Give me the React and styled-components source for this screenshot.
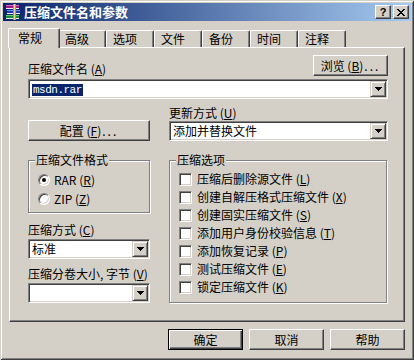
import React from 'react';
import styled, { createGlobalStyle, css } from 'styled-components';

const FACE = '#D4D0C8';
const HI = '#FFFFFF';
const SH = '#808080';
const DK = '#404040';

const Global = createGlobalStyle`
  html, body { margin: 0; padding: 0; background: ${FACE}; }
  body { font-family: "Noto Sans CJK SC", "DejaVu Sans", sans-serif; font-size: 12px; }
  * { box-sizing: border-box; }
`;

const Window = styled.div`
  width: 414px;
  height: 360px;
  background: ${FACE};
  padding: 3px;
  box-shadow: inset 1px 1px 0 ${FACE}, inset -1px -1px 0 ${DK}, inset 2px 2px 0 ${HI}, inset -2px -2px 0 ${SH};
  display: flex;
  flex-direction: column;
  color: #000;
  font-family: "Noto Sans CJK SC", "DejaVu Sans", sans-serif;
  font-size: 12px;
  line-height: 14px;
`;

const TitleBar = styled.div`
  height: 18px;
  flex: none;
  background: linear-gradient(to right, #0A246A, #A6CAF0);
  display: flex;
  align-items: center;
  padding: 0 2px;
  color: #fff;
`;

const TitleText = styled.div`
  flex: 1;
  margin-left: 3px;
  font-weight: bold;
  font-size: 13px;
  line-height: 16px;
  white-space: nowrap;
`;

const CaptionBtn = styled.div`
  width: 16px;
  height: 14px;
  background: ${FACE};
  border: 1px solid;
  border-color: ${HI} ${DK} ${DK} ${HI};
  box-shadow: inset -1px -1px 0 ${SH};
  display: flex;
  align-items: center;
  justify-content: center;
  color: #000;
  margin-left: ${p => p.$gap || 0}px;
  font-family: "Liberation Sans", sans-serif;
  font-weight: bold;
  font-size: 11px;
  line-height: 12px;
`;

const Client = styled.div`
  flex: 1;
  padding: 7px 6px 0 6px;
  display: flex;
  flex-direction: column;
`;

const TabStrip = styled.div`
  display: flex;
  align-items: flex-end;
  height: 19px;
  padding-left: 1px;
  position: relative;
  z-index: 1;
`;

const Tab = styled.div`
  width: 48px;
  height: 17px;
  border-top: 1px solid ${HI};
  border-left: 1px solid ${HI};
  border-right: 1px solid ${DK};
  border-radius: 2px 2px 0 0;
  box-shadow: inset -1px 0 0 ${SH};
  padding: 1px 0 0 6px;
  white-space: nowrap;
  background: ${FACE};
  ${p => p.$active && css`
    width: 52px;
    height: 20px;
    margin: 0 -2px -1px -2px;
    padding: 2px 0 0 9px;
    position: relative;
    z-index: 2;
  `}
`;

const Panel = styled.div`
  width: 396px;
  height: 275px;
  border-top: 1px solid ${HI};
  border-left: 1px solid ${HI};
  border-right: 1px solid ${DK};
  border-bottom: 1px solid ${DK};
  box-shadow: inset -1px -1px 0 ${SH};
  padding: 7px 16px 0 18px;
  display: flex;
  flex-direction: column;
`;

const TopRow = styled.div`
  display: flex;
  align-items: flex-end;
  justify-content: space-between;
  height: 21px;
`;

const Label = styled.div`
  height: 14px;
  line-height: 14px;
  white-space: nowrap;
  margin-top: ${p => p.$mt || 0}px;
`;

const Dots = styled.span`
  letter-spacing: 2px;
  margin-left: 1px;
`;

const Button = styled.div`
  width: ${p => p.$w ? `${p.$w}px` : '100%'};
  height: 21px;
  background: ${FACE};
  border: 1px solid;
  border-color: ${HI} ${DK} ${DK} ${HI};
  box-shadow: inset -1px -1px 0 ${SH};
  display: flex;
  align-items: center;
  justify-content: center;
  white-space: nowrap;
  padding-top: 1px;
  ${p => p.$default && css`
    border-color: #000;
    box-shadow: inset 1px 1px 0 ${HI}, inset -1px -1px 0 ${DK}, inset -2px -2px 0 ${SH};
  `}
`;

const Combo = styled.div`
  height: 20px;
  width: 100%;
  background: #fff;
  border: 1px solid;
  border-color: ${SH} ${HI} ${HI} ${SH};
  box-shadow: inset 1px 1px 0 ${DK}, inset -1px -1px 0 ${FACE};
  padding: 1px;
  display: flex;
  align-items: center;
  margin-top: ${p => p.$mt || 0}px;
`;

const ComboText = styled.div`
  flex: 1;
  padding-left: 2px;
  white-space: nowrap;
  line-height: 16px;
`;

const Selected = styled.span`
  background: #0A246A;
  color: #fff;
  padding: 0 1px;
  font-family: "Liberation Mono", "DejaVu Sans Mono", monospace;
  font-size: 11px;
  letter-spacing: -0.5px;
`;

const ArrowBtn = styled.div`
  width: 16px;
  height: 16px;
  flex: none;
  background: ${FACE};
  border: 1px solid;
  border-color: ${FACE} ${DK} ${DK} ${FACE};
  box-shadow: inset 1px 1px 0 ${HI}, inset -1px -1px 0 ${SH};
  display: flex;
  align-items: center;
  justify-content: center;
`;

const Columns = styled.div`
  display: grid;
  grid-template-columns: 122px 219px;
  column-gap: 19px;
  margin-top: ${p => p.$mt || 0}px;
`;

const Cell = styled.div`
  display: flex;
  flex-direction: column;
  justify-content: ${p => p.$end ? 'flex-end' : 'flex-start'};
`;

const Group = styled.div`
  position: relative;
  border: 1px solid ${SH};
  box-shadow: inset 1px 1px 0 ${HI}, 1px 1px 0 ${HI};
  padding: 9px 0 ${p => p.$pb}px 9px;
  width: ${p => p.$w}px;
`;

const GroupTitle = styled.span`
  position: absolute;
  top: -8px;
  left: 6px;
  padding: 0 1px;
  background: ${FACE};
  line-height: 14px;
  white-space: nowrap;
`;

const OptionRow = styled.div`
  display: flex;
  align-items: center;
  height: ${p => p.$h}px;
  white-space: nowrap;
`;

const Radio = styled.div`
  width: 12px;
  height: 12px;
  border-radius: 50%;
  background: #fff;
  border: 1px solid;
  border-color: ${SH} ${HI} ${HI} ${SH};
  box-shadow: inset 1px 1px 0 ${DK}, inset -1px -1px 0 ${FACE};
  margin-right: 4px;
  display: flex;
  align-items: center;
  justify-content: center;
  flex: none;
`;

const Dot = styled.div`
  width: 4px;
  height: 4px;
  border-radius: 50%;
  background: #000;
`;

const Check = styled.div`
  width: 13px;
  height: 13px;
  background: #fff;
  border: 1px solid;
  border-color: ${SH} ${HI} ${HI} ${SH};
  box-shadow: inset 1px 1px 0 ${DK}, inset -1px -1px 0 ${FACE};
  margin-right: 5px;
  flex: none;
`;

const Footer = styled.div`
  display: flex;
  justify-content: flex-end;
  gap: 6px;
  margin-top: 7px;
  width: 396px;
`;

const Arrow = () => (
  <svg width="7" height="4" viewBox="0 0 7 4" shapeRendering="crispEdges">
    <path d="M0 0h7v1h-1v1h-1v1h-1v1h-1v-1h-1v-1h-1v-1h-1z" fill="#000" />
  </svg>
);

const RarIcon = () => (
  <svg width="16" height="16" viewBox="0 0 16 16" shapeRendering="crispEdges">
    <rect x="1" y="1" width="13" height="4" fill="#9C1C80" />
    <rect x="1" y="1" width="13" height="1" fill="#E060C8" />
    <rect x="2" y="6" width="13" height="4" fill="#2038B8" />
    <rect x="2" y="6" width="13" height="1" fill="#6890F0" />
    <rect x="1" y="11" width="13" height="4" fill="#18883C" />
    <rect x="1" y="11" width="13" height="1" fill="#60D070" />
    <rect x="1" y="4" width="13" height="1" fill="#F0F0F0" />
    <rect x="2" y="9" width="13" height="1" fill="#F0F0F0" />
    <rect x="1" y="14" width="13" height="1" fill="#F0F0F0" />
    <rect x="8" y="0" width="3" height="16" fill="#C09848" />
    <rect x="9" y="0" width="1" height="16" fill="#E8D090" />
  </svg>
);

const CloseGlyph = () => (
  <svg width="8" height="7" viewBox="0 0 8 7" shapeRendering="crispEdges">
    <path d="M0 0h2v1h1v1h2v-1h1v-1h2v1h-1v1h-1v1h-1v1h1v1h1v1h1v1h-2v-1h-1v-1h-2v1h-1v1h-2v-1h1v-1h1v-1h1v-1h-1v-1h-1v-1h-1z" fill="#000" />
  </svg>
);

const M = ({ k }) => <> (<u>{k}</u>)</>;

const ComboBox = ({ children }) => (
  <>
    <ComboText>{children}</ComboText>
    <ArrowBtn><Arrow /></ArrowBtn>
  </>
);

const checks = [
  ['压缩后删除源文件', 'L'],
  ['创建自解压格式压缩文件', 'X'],
  ['创建固实压缩文件', 'S'],
  ['添加用户身份校验信息', 'T'],
  ['添加恢复记录', 'P'],
  ['测试压缩文件', 'E'],
  ['锁定压缩文件', 'K'],
];

const tabs = ['常规', '高级', '选项', '文件', '备份', '时间', '注释'];

export default function App() {
  return (
    <>
      <Global />
      <Window>
        <TitleBar>
          <RarIcon />
          <TitleText>压缩文件名和参数</TitleText>
          <CaptionBtn>?</CaptionBtn>
          <CaptionBtn $gap={2}><CloseGlyph /></CaptionBtn>
        </TitleBar>
        <Client>
          <TabStrip>
            {tabs.map((t, i) => (
              <Tab key={t} $active={i === 0}>{t}</Tab>
            ))}
          </TabStrip>
          <Panel>
            <TopRow>
              <Label>压缩文件名<M k="A" /></Label>
              <Button $w={75}>浏览<M k="B" /><Dots>...</Dots></Button>
            </TopRow>
            <Combo $mt={3}>
              <ComboBox><Selected>msdn.rar</Selected></ComboBox>
            </Combo>
            <Columns $mt={7}>
              <Cell $end>
                <Button>配置<M k="F" /><Dots>...</Dots></Button>
              </Cell>
              <Cell>
                <Label>更新方式<M k="U" /></Label>
                <Combo $mt={1}><ComboBox>添加并替换文件</ComboBox></Combo>
              </Cell>
            </Columns>
            <Columns $mt={19}>
              <Cell>
                <Group $w={122} $pb={4}>
                  <GroupTitle>压缩文件格式</GroupTitle>
                  <OptionRow $h={19}><Radio><Dot /></Radio>RAR<M k="R" /></OptionRow>
                  <OptionRow $h={19}><Radio />ZIP<M k="Z" /></OptionRow>
                </Group>
                <Label $mt={10}>压缩方式<M k="C" /></Label>
                <Combo $mt={2}><ComboBox>标准</ComboBox></Combo>
                <Label $mt={8}>压缩分卷大小, 字节<M k="V" /></Label>
                <Combo $mt={2}><ComboBox></ComboBox></Combo>
              </Cell>
              <Cell>
                <Group $w={218} $pb={6}>
                  <GroupTitle>压缩选项</GroupTitle>
                  {checks.map(([t, k]) => (
                    <OptionRow key={k} $h={18}><Check />{t}<M k={k} /></OptionRow>
                  ))}
                </Group>
              </Cell>
            </Columns>
          </Panel>
          <Footer>
            <Button $w={75} $default>确定</Button>
            <Button $w={75}>取消</Button>
            <Button $w={75}>帮助</Button>
          </Footer>
        </Client>
      </Window>
    </>
  );
}
